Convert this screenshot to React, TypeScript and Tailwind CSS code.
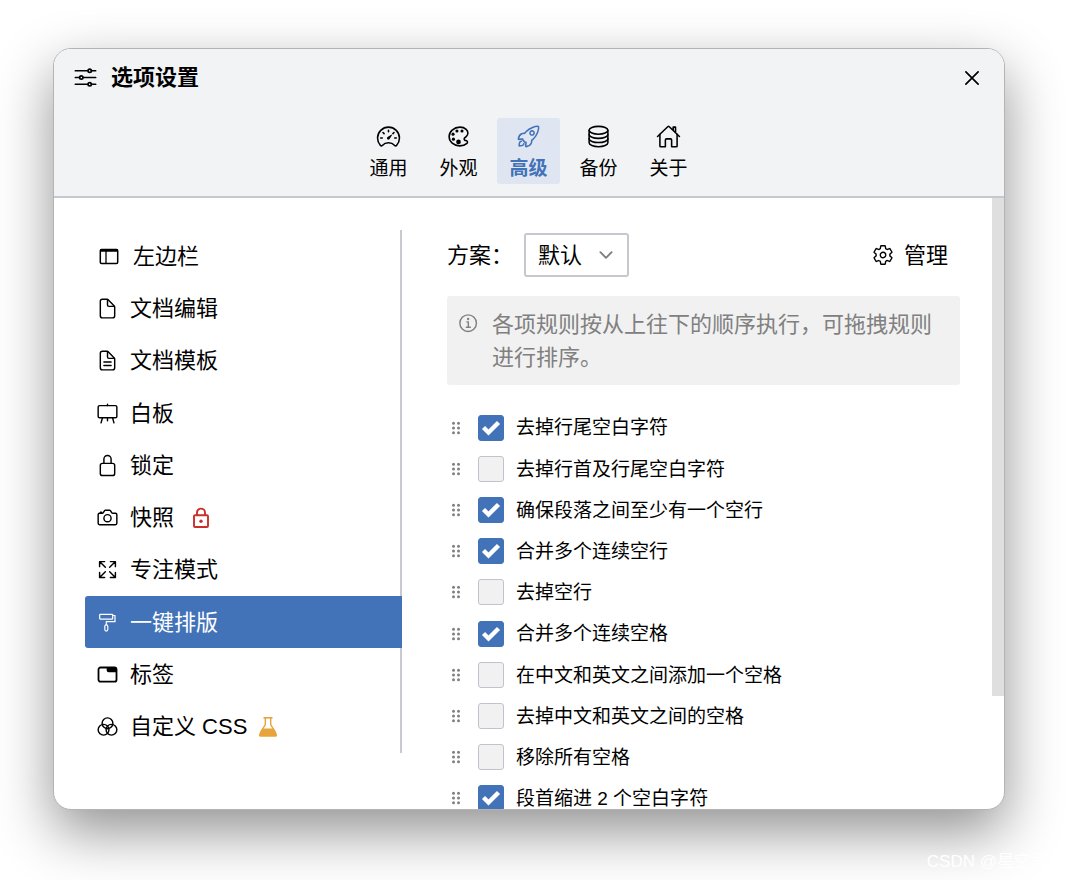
import React, { useState } from "react";
import {
  IoCameraOutline,
  IoChevronDown,
  IoCloseOutline,
  IoColorFilterOutline,
  IoColorPaletteOutline,
  IoDocumentOutline,
  IoDocumentTextOutline,
  IoEaselOutline,
  IoExpandOutline,
  IoHomeOutline,
  IoInformationCircleOutline,
  IoLockClosedOutline,
  IoOptionsOutline,
  IoRocketOutline,
  IoServerOutline,
  IoSettingsOutline,
  IoSpeedometerOutline,
} from "react-icons/io5";

type IconProps = { className?: string };
type Icon = (props: IconProps) => React.ReactNode;

const SidebarIcon: Icon = ({ className }) => (
  <svg viewBox="-1.5 -1.5 23 23" className={className} fill="none" stroke="currentColor" aria-hidden="true">
    <rect x="1.3" y="3" width="17.4" height="14" rx="1.2" strokeWidth="1.5" />
    <path d="M1.300 4.200h17.400" strokeWidth="2.200" />
    <path d="M7 4v13" strokeWidth="1.300" />
  </svg>
);

const RollerIcon: Icon = ({ className }) => (
  <svg viewBox="-1.5 -1.5 23 23" className={className} fill="none" stroke="currentColor" strokeWidth="1.2" strokeLinejoin="round" aria-hidden="true">
    <rect x="2.2" y="1.800" width="13" height="4.800" rx="0.500" />
    <path d="M15.200 3H17.500v6.200H8.800v3.200" />
    <rect x="7.300" y="12.400" width="3" height="6.200" rx="1.500" />
  </svg>
);

const TabIcon: Icon = ({ className }) => (
  <svg viewBox="-1.5 -1.5 23 23" className={className} fill="none" stroke="currentColor" aria-hidden="true">
    <rect x="1" y="3" width="18" height="14.200" rx="2" strokeWidth="1.800" />
    <path d="M9.200 3H17a2 2 0 0 1 2 2v2.800h-7.800a2 2 0 0 1-2-2z" fill="currentColor" stroke="none" />
  </svg>
);

const RedLock: Icon = ({ className }) => (
  <svg viewBox="0 0 20 22" className={className} fill="none" stroke="currentColor" strokeWidth="1.900" aria-hidden="true">
    <rect x="3" y="8.300" width="14" height="11.700" rx="1" />
    <path d="M6 8.300V5.600a4 4 0 0 1 8 0v2.700" />
    <circle cx="10" cy="14.200" r="1.700" fill="currentColor" stroke="none" />
  </svg>
);

const Flask: Icon = ({ className }) => (
  <svg viewBox="0 0 20 22" className={className} fill="none" stroke="currentColor" aria-hidden="true">
    <path d="M5.500 1.800h9" strokeWidth="1.600" />
    <path d="M7.300 2v6.500L2.200 17.200M12.700 2v6.500l5.100 8.700" strokeWidth="1.400" />
    <path d="M4.300 12.500h11.400l3.100 5.400c.8 1.500-.1 2.900-1.700 2.900H2.900c-1.600 0-2.500-1.400-1.700-2.900z" fill="currentColor" stroke="none" />
  </svg>
);

const Grip: Icon = ({ className }) => (
  <svg viewBox="0 0 10 14" className={className} fill="currentColor" aria-hidden="true">
    <circle cx="2.500" cy="2.200" r="1.500" />
    <circle cx="7.500" cy="2.200" r="1.500" />
    <circle cx="2.500" cy="7" r="1.500" />
    <circle cx="7.500" cy="7" r="1.500" />
    <circle cx="2.500" cy="11.800" r="1.500" />
    <circle cx="7.500" cy="11.800" r="1.500" />
  </svg>
);

const tabs: { label: string; icon: Icon }[] = [
  { label: "通用", icon: IoSpeedometerOutline },
  { label: "外观", icon: IoColorPaletteOutline },
  { label: "高级", icon: IoRocketOutline },
  { label: "备份", icon: IoServerOutline },
  { label: "关于", icon: IoHomeOutline },
];

const sections: { label: string; icon: Icon; wide?: boolean; badge?: "lock" | "flask" }[] = [
  { label: "左边栏", icon: SidebarIcon, wide: true },
  { label: "文档编辑", icon: IoDocumentOutline },
  { label: "文档模板", icon: IoDocumentTextOutline },
  { label: "白板", icon: IoEaselOutline },
  { label: "锁定", icon: IoLockClosedOutline },
  { label: "快照", icon: IoCameraOutline, badge: "lock" },
  { label: "专注模式", icon: IoExpandOutline },
  { label: "一键排版", icon: RollerIcon },
  { label: "标签", icon: TabIcon },
  { label: "自定义 CSS", icon: IoColorFilterOutline, badge: "flask" },
];

const rules: { label: string; on: boolean }[] = [
  { label: "去掉行尾空白字符", on: true },
  { label: "去掉行首及行尾空白字符", on: false },
  { label: "确保段落之间至少有一个空行", on: true },
  { label: "合并多个连续空行", on: true },
  { label: "去掉空行", on: false },
  { label: "合并多个连续空格", on: true },
  { label: "在中文和英文之间添加一个空格", on: false },
  { label: "去掉中文和英文之间的空格", on: false },
  { label: "移除所有空格", on: false },
  { label: "段首缩进 2 个空白字符", on: true },
];

function Rule({ label, on }: { label: string; on: boolean }) {
  const [checked, setChecked] = useState(on);
  return (
    <li className="flex flex-1 items-center">
      <Grip className="ml-1 h-3.5 w-2.5 shrink-0 text-[#808080]" />
      <label className="ml-[17px] flex items-center gap-3">
        <span className="relative flex h-[26px] w-[26px] shrink-0">
          <input
            type="checkbox"
            checked={checked}
            onChange={(e) => setChecked(e.target.checked)}
            className="peer h-full w-full appearance-none rounded-[3px] border border-[#bfc3cb] bg-[#f1f1f1] checked:border-[#4272b8] checked:bg-[#4272b8]"
          />
          <svg
            viewBox="0 0 26 26"
            className="pointer-events-none absolute inset-0 hidden text-white peer-checked:block"
            fill="none"
            stroke="currentColor"
            strokeWidth="4.400"
            aria-hidden="true"
          >
            <path d="M5.500 12.500l5 5L20.500 7.500" />
          </svg>
        </span>
        <span className="pt-0.5">{label}</span>
      </label>
    </li>
  );
}

export default function App() {
  const [tab, setTab] = useState("高级");
  const [section, setSection] = useState("一键排版");

  return (
    <div className="relative flex h-screen overflow-hidden bg-white pt-12 pr-[75px] pb-[70px] pl-[53px] font-['Liberation_Sans','Noto_Sans_CJK_SC',sans-serif] text-black">
      <main className="flex min-w-0 flex-1 flex-col overflow-hidden rounded-[18px] border border-[#b4b4b4] bg-white shadow-[0_22px_56px_rgba(0,0,0,0.43)]">
        <header className="border-b-2 border-[#c5c9cf] bg-[#f2f3f5] pb-3">
          <div className="flex h-[57px] items-center justify-between px-[18px]">
            <h1 className="flex items-center gap-3 text-[22px] font-bold">
              <IoOptionsOutline className="h-[27px] w-[27px]" />
              选项设置
            </h1>
            <button type="button" aria-label="关闭" className="flex h-7 w-7 items-center justify-center">
              <IoCloseOutline className="h-7 w-7" />
            </button>
          </div>
          <nav className="mt-3 flex justify-center gap-[7px] pr-px">
            {tabs.map(({ label, icon: TabGlyph }) => (
              <button
                key={label}
                type="button"
                onClick={() => setTab(label)}
                className={
                  label === tab
                    ? "flex h-[66px] w-[63px] flex-col items-center rounded-[3px] bg-[#e0e6f1] pt-1.5 text-[19px] leading-7 font-bold text-[#4272b8]"
                    : "flex h-[66px] w-[63px] flex-col items-center rounded-[3px] pt-1.5 text-[19px] leading-7"
                }
              >
                <TabGlyph className="mb-1.5 h-[25px] w-[25px] shrink-0" />
                {label}
              </button>
            ))}
          </nav>
        </header>

        <div className="flex min-h-0 flex-1">
          <aside className="w-[348px] shrink-0 pt-8 pl-[31px]">
            <ul className="flex h-[523px] flex-col border-r-2 border-[#c9cad0] text-[22px]">
              {sections.map(({ label, icon: Glyph, wide, badge }) => (
                <li key={label} className="-mr-0.5 flex flex-1">
                  <button
                    type="button"
                    onClick={() => setSection(label)}
                    className={
                      label === section
                        ? "flex flex-1 items-center gap-[11px] rounded-l-[3px] bg-[#4272b8] pl-[11px] text-white"
                        : "flex flex-1 items-center gap-[11px] pl-[11px]"
                    }
                  >
                    <Glyph className={wide ? "h-[23px] w-[26px] shrink-0" : "h-[23px] w-[23px] shrink-0"} />
                    {label}
                    {badge === "lock" && <RedLock className="ml-1.5 h-[22px] w-5 text-[#c9302c]" />}
                    {badge === "flask" && <Flask className="h-[22px] w-5 text-[#e8a33a]" />}
                  </button>
                </li>
              ))}
            </ul>
          </aside>

          <section className="min-w-0 flex-1 overflow-hidden pt-[35px] pr-8 pl-[45px]">
            <div className="flex items-center text-[22px]">
              <label htmlFor="scheme">方案：</label>
              <div className="relative ml-[11px]">
                <select
                  id="scheme"
                  className="block h-11 w-[105px] appearance-none rounded-[3px] border-2 border-[#c6c8d0] bg-white pl-3"
                >
                  <option>默认</option>
                </select>
                <IoChevronDown className="pointer-events-none absolute top-3 right-[13px] h-5 w-5 text-[#808080]" />
              </div>
              <button type="button" className="mr-3 ml-auto flex items-center gap-2.5">
                <IoSettingsOutline className="h-[22px] w-[22px]" />
                管理
              </button>
            </div>

            <div className="mt-[19px] flex gap-3 rounded-[3px] bg-[#f1f1f1] pt-3 pr-3 pb-[11px] pl-2.5 text-[22px] leading-[33px] text-[#808080]">
              <IoInformationCircleOutline className="mt-1 h-[23px] w-[23px] shrink-0" />
              <p>各项规则按从上往下的顺序执行，可拖拽规则进行排序。</p>
            </div>

            <ul className="mt-[22px] flex h-[412px] flex-col text-[19px]">
              {rules.map((rule) => (
                <Rule key={rule.label} {...rule} />
              ))}
            </ul>
          </section>

          <div className="w-3 shrink-0">
            <div className="h-[81.5%] bg-[#dfdfdf]" />
          </div>
        </div>
      </main>
      <p className="absolute right-8 bottom-1.5 text-[17px] text-white">CSDN @星空爱</p>
    </div>
  );
}
